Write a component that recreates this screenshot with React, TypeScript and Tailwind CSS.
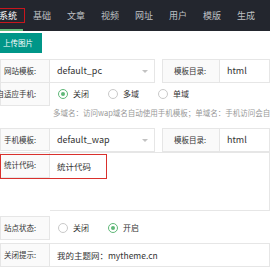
import React from "react";

const tabs = ["系统", "基础", "文章", "视频", "网址", "用户", "模版", "生成", "插件"];

function Label({ text, h = "h-[24px]" }: { text: string; h?: string }) {
  return (
    <div
      className={`w-[50px] shrink-0 ${h} border border-[#e6e6e6] bg-[#fafafa] pr-[13px] text-[7.5px] text-[#333] flex items-center justify-end whitespace-nowrap`}
    >
      {text}
    </div>
  );
}

function Radio({ label, checked }: { label: string; checked?: boolean }) {
  return (
    <div className="w-[50px] flex items-center gap-[5px]">
      <span
        className={`w-[10px] h-[10px] rounded-full border flex items-center justify-center bg-white ${
          checked ? "border-[#5fb878]" : "border-[#c9c9c9]"
        }`}
      >
        {checked && <span className="w-[4px] h-[4px] rounded-full bg-[#5fb878]" />}
      </span>
      <span className="text-[8px] text-[#333] whitespace-nowrap">{label}</span>
    </div>
  );
}

function SelectBox({ value }: { value: string }) {
  return (
    <div className="w-[105px] h-[24px] border border-l-0 border-[#e6e6e6] bg-white flex items-center pl-[7px] pr-[6px] text-[9px] text-[#333]">
      <span className="flex-1">{value}</span>
      <span className="w-0 h-0 border-l-[3px] border-r-[3px] border-t-[3px] border-l-transparent border-r-transparent border-t-[#c2c2c2]" />
    </div>
  );
}

function DirRow({ value }: { value: string }) {
  return (
    <div className="flex ml-[7px] flex-1">
      <div className="w-[58px] shrink-0 h-[24px] border border-[#e6e6e6] bg-[#fafafa] text-[7.5px] text-[#333] flex items-center justify-end pr-[13px]">
        模板目录:
      </div>
      <div className="flex-1 h-[24px] border border-l-0 border-[#e6e6e6] flex items-center pl-[7px] text-[9px] text-[#333]">
        {value}
      </div>
    </div>
  );
}

export default function App() {
  return (
    <div className="w-[270px] h-[270px] overflow-hidden bg-white font-['Noto_Sans_CJK_SC','Noto_Sans',sans-serif]">
      <nav className="h-[31px] bg-[#23262e] flex -ml-[9px]">
        {tabs.map((t, i) => (
          <div
            key={t}
            className={`relative w-[34px] shrink-0 flex items-center justify-center text-[9px] ${
              i === 0 ? "text-white" : "text-[#bfc1c4]"
            }`}
          >
            {i === 0 ? (
              <span className="w-full h-[15px] border border-[#c8161d] flex items-center justify-center">{t}</span>
            ) : (
              t
            )}
            {i === 0 && <span className="absolute bottom-0 left-[9px] right-[2px] h-[2px] bg-[#5fb878]" />}
          </div>
        ))}
      </nav>

      <div className="pt-[2px]">
        <div className="w-[42px] h-[20px] bg-[#009688] text-white text-[7.5px] flex items-center pl-[3px]">
          上传图片
        </div>
      </div>

      <div className="mt-[6px] flex">
        <Label text="网站模板:" />
        <SelectBox value="default_pc" />
        <DirRow value="html" />
      </div>

      <div className="flex -mt-px">
        <Label text="自适应手机:" />
        <div className="flex items-center pl-[8px]">
          <Radio label="关闭" checked />
          <Radio label="多域" />
          <Radio label="单域" />
        </div>
      </div>

      <div className="h-[22px] pl-[53px] pt-[2px] text-[7.5px] leading-[9px] text-[#999] whitespace-nowrap">
        多域名：访问wap域名自动使用手机模板；单域名：手机访问会自动使用手机模板
      </div>

      <div className="flex">
        <Label text="手机模板:" h="h-[23px]" />
        <SelectBox value="default_wap" />
        <DirRow value="html" />
      </div>

      <div className="relative flex">
        <Label text="统计代码:" h="h-[26px]" />
        <div className="flex-1 h-[59px] border border-l-0 border-[#e6e6e6] pl-[7px] pt-[8px] text-[8.5px] text-[#333] leading-[10px]">
          统计代码
        </div>
        <div className="absolute left-0 top-[2px] w-[107px] h-[25px] border-[1.5px] border-[#d9302c]" />
      </div>

      <div className="flex mt-[5px]">
        <Label text="站点状态:" />
        <div className="flex items-center pl-[8px]">
          <Radio label="关闭" />
          <Radio label="开启" checked />
        </div>
      </div>

      <div className="flex mt-[3px]">
        <Label text="关闭提示:" />
        <div className="flex-1 h-[24px] border border-l-0 border-[#e6e6e6] flex items-center pl-[7px] text-[8.5px] text-[#333] whitespace-nowrap">
          我的主题网：mytheme.cn
        </div>
      </div>
    </div>
  );
}
